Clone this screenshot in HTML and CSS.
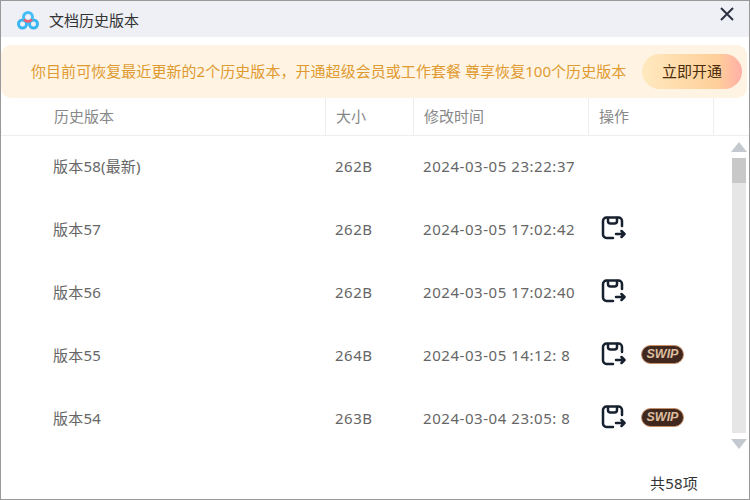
FILE: index.html
```html
<!DOCTYPE html>
<html lang="zh-CN">
<head>
    <meta charset="UTF-8">
    <title>文档历史版本</title>
    <link rel="stylesheet" href="styles.css">
</head>
<body>

<svg class="defs" width="0" height="0">
    <symbol id="restore" viewBox="0 0 25 24">
        <path d="M21 10V5a3.500 3.500 0 0 0-3.500-3.500h-12A3.500 3.500 0 0 0 2 5v13.500A3.500 3.500 0 0 0 5.500 22H12" />
        <path d="M7 2v3a2.500 2.500 0 0 0 2.500 2.500h4A2.500 2.500 0 0 0 16 5V2" />
        <path d="M15 18h8.500M20.500 15l3 3-3 3" />
    </symbol>
</svg>

<div class="window">
    <!-- Title bar -->
    <div class="titlebar">
        <svg class="logo" width="26" height="22" viewBox="0 0 26 22">
            <circle cx="7.500" cy="15" r="4" fill="none" stroke="#38b6f2" stroke-width="3" />
            <circle cx="18.500" cy="15" r="4" fill="none" stroke="#38b6f2" stroke-width="3" />
            <circle cx="13" cy="8" r="4.500" fill="none" stroke="#45bdf5" stroke-width="3" />
            <path d="M8 11a6 6 0 0 0 10 0l-2.200-1.300a3.500 3.500 0 0 1-5.600 0z" fill="#f0606e" />
        </svg>
        <span class="title">文档历史版本</span>
        <svg class="close" width="14" height="14" viewBox="0 0 14 14">
            <path d="M1 1l12 12M13 1L1 13" fill="none" stroke="#2d3142" stroke-width="2" />
        </svg>
    </div>

    <!-- Upgrade banner -->
    <div class="banner">
        <span class="banner-text">你目前可恢复最近更新的2个历史版本，开通超级会员或工作套餐 尊享恢复100个历史版本</span>
        <button class="upgrade">立即开通</button>
    </div>

    <!-- Table header -->
    <div class="thead">
        <div class="th th-name">历史版本</div>
        <div class="th th-size">大小</div>
        <div class="th th-time">修改时间</div>
        <div class="th th-action">操作</div>
    </div>

    <div class="tbody">
        <div class="rows">
            <div class="row">
                <div class="td-name">版本58(最新)</div>
                <div class="td-size">262B</div>
                <div class="td-time">2024-03-05 23:22:37</div>
                <div class="td-action"></div>
            </div>
            <div class="row">
                <div class="td-name">版本57</div>
                <div class="td-size">262B</div>
                <div class="td-time">2024-03-05 17:02:42</div>
                <div class="td-action"><svg class="restore"><use href="#restore" /></svg></div>
            </div>
            <div class="row">
                <div class="td-name">版本56</div>
                <div class="td-size">262B</div>
                <div class="td-time">2024-03-05 17:02:40</div>
                <div class="td-action"><svg class="restore"><use href="#restore" /></svg></div>
            </div>
            <div class="row">
                <div class="td-name">版本55</div>
                <div class="td-size">264B</div>
                <div class="td-time">2024-03-05 14:12: 8</div>
                <div class="td-action"><svg class="restore"><use href="#restore" /></svg><span class="swip">SWIP</span></div>
            </div>
            <div class="row">
                <div class="td-name">版本54</div>
                <div class="td-size">263B</div>
                <div class="td-time">2024-03-04 23:05: 8</div>
                <div class="td-action"><svg class="restore"><use href="#restore" /></svg><span class="swip">SWIP</span></div>
            </div>
        </div>

        <!-- Scrollbar -->
        <div class="scrollbar">
            <div class="arrow arrow-up"></div>
            <div class="track"><div class="thumb"></div></div>
            <div class="arrow arrow-down"></div>
        </div>
    </div>

    <div class="footer">共58项</div>
</div>

</body>
</html>
```

FILE: styles.css
```css
* {
    box-sizing: border-box;
}
body {
    margin: 0;
    font-family: "Noto Sans", "Noto Sans CJK SC", sans-serif;
    font-size: 15px;
    color: #666;
}
.defs {
    position: absolute;
}
.window {
    width: 750px;
    height: 500px;
    border: 1px solid #999;
    background: #fff;
    display: flex;
    flex-direction: column;
    overflow: hidden;
}

.titlebar {
    height: 36px;
    flex: none;
    background: #eef0f5;
    display: flex;
    align-items: center;
    padding-left: 14px;
}
.logo {
    margin-right: 8px;
    margin-top: 1px;
}
.title {
    color: #333;
}
.close {
    margin-left: auto;
    margin-right: 15px;
    margin-top: -10px;
}

.banner {
    height: 53px;
    flex: none;
    margin-top: 8px;
    margin-right: 2px;
    background: #fff4e3;
    border-radius: 10px;
    display: flex;
    align-items: center;
    justify-content: space-between;
    padding: 0 5px 0 30px;
}
.banner-text {
    color: #e09a30;
    letter-spacing: 0.05px;
    margin-top: -2px;
}
.upgrade {
    width: 100px;
    height: 35px;
    border: 0;
    border-radius: 18px;
    padding: 0 0 3px;
    font: inherit;
    color: #4a2c0a;
    background: linear-gradient(90deg, #ffe9bf, #ffcf99 75%, #ffb0a8);
}

.thead {
    height: 38px;
    flex: none;
    display: flex;
    border-bottom: 1px solid #eee;
    color: #888;
}
.th {
    display: flex;
    align-items: center;
    padding-left: 10px;
    padding-bottom: 2px;
    border-right: 1px solid #eee;
}
.th-name {
    width: 325px;
    padding-left: 53px;
}
.th-size {
    width: 88px;
}
.th-time {
    width: 175px;
}
.th-action {
    width: 125px;
}

.tbody {
    height: 320px;
    flex: none;
    display: flex;
}
.rows {
    flex: 1;
    margin-top: -2px;
}
.row {
    height: 63px;
    display: flex;
    align-items: center;
}
.td-name {
    width: 325px;
    padding-left: 52px;
    letter-spacing: 0.2px;
}
.td-size {
    width: 88px;
    padding-left: 9px;
    letter-spacing: 0.5px;
}
.td-time {
    width: 175px;
    padding-left: 9px;
    letter-spacing: 0.55px;
}
.td-action {
    display: flex;
    align-items: center;
    padding-left: 12px;
}
.restore {
    width: 25px;
    height: 24px;
    margin-top: -2px;
    fill: none;
    stroke: #16202e;
    stroke-width: 2.500;
    stroke-linecap: round;
    stroke-linejoin: round;
}
.swip {
    width: 43px;
    height: 19px;
    margin-left: 15px;
    border: 1px solid #c8906a;
    border-radius: 10px;
    background: #40281f;
    color: #dcbd9f;
    font-family: "Liberation Sans", sans-serif;
    font-size: 12.500px;
    font-style: italic;
    font-weight: bold;
    line-height: 17px;
    text-align: center;
}

.scrollbar {
    width: 15px;
    margin-right: 3px;
    padding-top: 6px;
    display: flex;
    flex-direction: column;
    align-items: center;
}
.arrow {
    width: 0;
    height: 0;
    flex: none;
    border-left: 8px solid transparent;
    border-right: 8px solid transparent;
}
.arrow-up {
    border-bottom: 10px solid #c4c9d0;
}
.arrow-down {
    border-top: 10px solid #c4c9d0;
}
.track {
    width: 14px;
    height: 275px;
    margin: 6px 0;
    background: #e6e6e6;
}
.thumb {
    height: 25px;
    background: #c8c8c8;
}

.footer {
    flex: 1;
    display: flex;
    align-items: center;
    justify-content: flex-end;
    padding: 10px 51px 0 0;
    color: #333;
    letter-spacing: 0.2px;
}
```
